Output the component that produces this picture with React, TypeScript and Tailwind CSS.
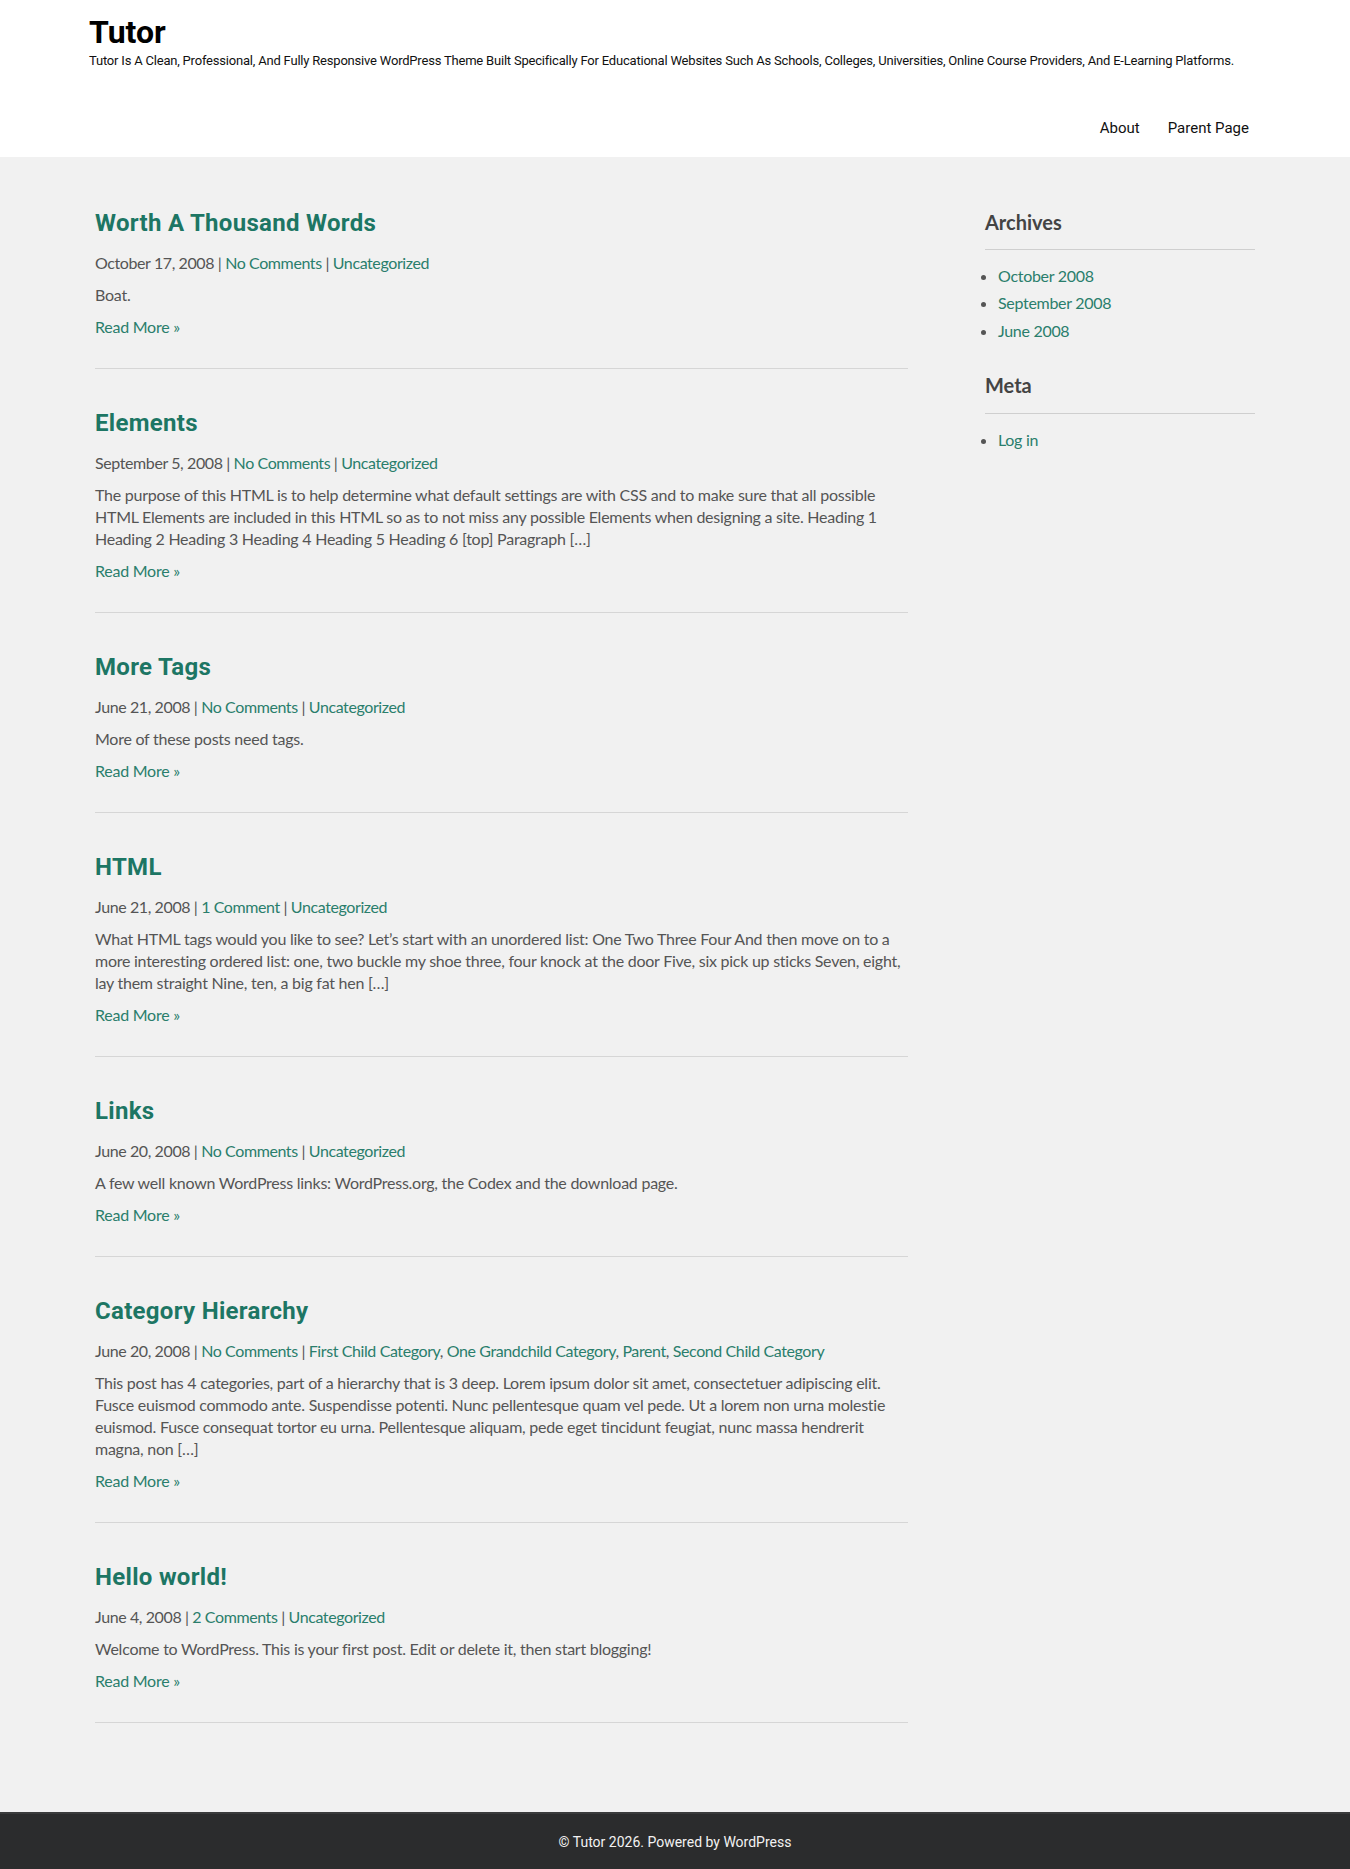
import React from "react";

type Post = {
  title: string;
  date: string;
  comments: string;
  cats: string[];
  body: string;
};

const posts: Post[] = [
  { title: "Worth A Thousand Words", date: "October 17, 2008", comments: "No Comments", cats: ["Uncategorized"], body: "Boat." },
  {
    title: "Elements",
    date: "September 5, 2008",
    comments: "No Comments",
    cats: ["Uncategorized"],
    body: "The purpose of this HTML is to help determine what default settings are with CSS and to make sure that all possible HTML Elements are included in this HTML so as to not miss any possible Elements when designing a site. Heading 1 Heading 2 Heading 3 Heading 4 Heading 5 Heading 6 [top] Paragraph […]",
  },
  { title: "More Tags", date: "June 21, 2008", comments: "No Comments", cats: ["Uncategorized"], body: "More of these posts need tags." },
  {
    title: "HTML",
    date: "June 21, 2008",
    comments: "1 Comment",
    cats: ["Uncategorized"],
    body: "What HTML tags would you like to see? Let’s start with an unordered list: One Two Three Four And then move on to a more interesting ordered list: one, two buckle my shoe three, four knock at the door Five, six pick up sticks Seven, eight, lay them straight Nine, ten, a big fat hen […]",
  },
  {
    title: "Links",
    date: "June 20, 2008",
    comments: "No Comments",
    cats: ["Uncategorized"],
    body: "A few well known WordPress links: WordPress.org, the Codex and the download page.",
  },
  {
    title: "Category Hierarchy",
    date: "June 20, 2008",
    comments: "No Comments",
    cats: ["First Child Category", "One Grandchild Category", "Parent", "Second Child Category"],
    body: "This post has 4 categories, part of a hierarchy that is 3 deep. Lorem ipsum dolor sit amet, consectetuer adipiscing elit. Fusce euismod commodo ante. Suspendisse potenti. Nunc pellentesque quam vel pede. Ut a lorem non urna molestie euismod. Fusce consequat tortor eu urna. Pellentesque aliquam, pede eget tincidunt feugiat, nunc massa hendrerit magna, non […]",
  },
  {
    title: "Hello world!",
    date: "June 4, 2008",
    comments: "2 Comments",
    cats: ["Uncategorized"],
    body: "Welcome to WordPress. This is your first post. Edit or delete it, then start blogging!",
  },
];

const bodyFont = { fontFamily: "Lato, 'Open Sans', sans-serif" };

export default function App() {
  return (
    <div className="min-h-[1869px] flex flex-col bg-[#f1f1f1]">
      <header className="bg-white h-[157px]">
        <div className="mx-auto w-[1172px] pt-[14px] font-['Roboto',sans-serif]">
          <div className="text-[32px] leading-[36px] font-bold text-black">Tutor</div>
          <div className="text-[13px] leading-[18px] text-[#111] mt-[2px] tracking-[-0.2px] whitespace-nowrap">
            Tutor Is A Clean, Professional, And Fully Responsive WordPress Theme Built Specifically For Educational Websites Such As Schools, Colleges, Universities, Online Course Providers, And E-Learning Platforms.
          </div>
          <nav className="flex justify-end mt-[46px] pr-[12px]">
            <a className="text-[15px] leading-[24px] text-[#111] px-[14px]">About</a>
            <a className="text-[15px] leading-[24px] text-[#111] pl-[14px]">Parent Page</a>
          </nav>
        </div>
      </header>

      <div className="flex-1">
        <div className="mx-auto w-[1160px] flex items-start gap-[77px] pt-[52px] pb-[89px]">
          <main className="w-[813px] flex flex-col gap-[40px] tracking-[-0.25px]" style={bodyFont}>
            {posts.map((p) => (
              <article key={p.title} className="border-b border-[#d6d6d6] pb-[20px]">
                <h2 className="font-['Roboto',sans-serif] font-bold text-[24px] leading-[29px] tracking-[0.3px] text-[#1d7664] mb-[14px]">{p.title}</h2>
                <p className="text-[16px] leading-[22px] text-[#555] mb-[10px] tracking-[-0.4px]">
                  {p.date} | <a className="text-[#2a7e6c]">{p.comments}</a> |{" "}
                  {p.cats.map((c, i) => (
                    <React.Fragment key={c}>
                      <a className="text-[#2a7e6c]">{c}</a>
                      {i < p.cats.length - 1 ? ", " : ""}
                    </React.Fragment>
                  ))}
                </p>
                <p className="text-[16px] leading-[22px] text-[#555] mb-[10px]">{p.body}</p>
                <p className="text-[16px] leading-[22px] mb-[10px]">
                  <a className="text-[#2a7e6c]">Read More »</a>
                </p>
              </article>
            ))}
          </main>

          <aside className="w-[270px] -mt-[1px] tracking-[-0.3px]" style={bodyFont}>
            <section className="mb-[27px]">
              <h3 className="text-[20px] leading-[28px] font-bold text-[#444] pb-[13px] border-b border-[#cfcfcf] tracking-normal">Archives</h3>
              <ul className="list-disc pl-[13px] mt-[12px] text-[16px] text-[#555]">
                <li className="leading-[27.4px]"><a className="text-[#2a7e6c]">October 2008</a></li>
                <li className="leading-[27.4px]"><a className="text-[#2a7e6c]">September 2008</a></li>
                <li className="leading-[27.4px]"><a className="text-[#2a7e6c]">June 2008</a></li>
              </ul>
            </section>
            <section>
              <h3 className="text-[20px] leading-[28px] font-bold text-[#444] pb-[14px] border-b border-[#cfcfcf] tracking-normal">Meta</h3>
              <ul className="list-disc pl-[13px] mt-[12px] text-[16px] text-[#555]">
                <li className="leading-[27.4px]"><a className="text-[#2a7e6c]">Log in</a></li>
              </ul>
            </section>
          </aside>
        </div>
      </div>

      <footer className="h-[58px] bg-[#2b2c2d] border-t-2 border-[#3a3b3c] flex items-center justify-center">
        <p className="font-['Roboto',sans-serif] text-[14px] text-[#f2f2f2]">© Tutor 2026. Powered by WordPress</p>
      </footer>
    </div>
  );
}
